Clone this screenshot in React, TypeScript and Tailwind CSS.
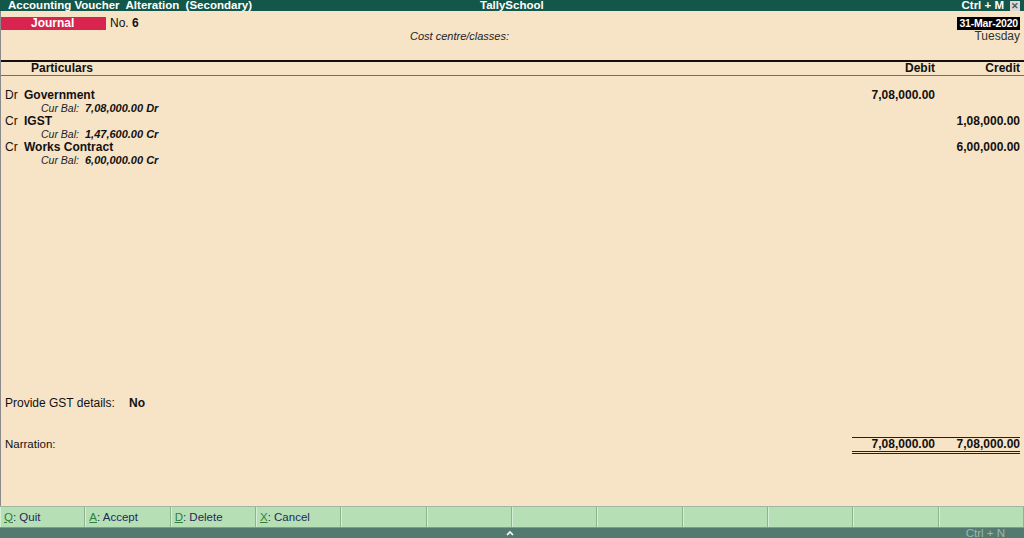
import React from "react";

const font = { fontFamily: '"Liberation Sans", Arial, sans-serif' };

const rows = [
  { side: "Dr", name: "Government", bal: "7,08,000.00 Dr", debit: "7,08,000.00", credit: "" },
  { side: "Cr", name: "IGST", bal: "1,47,600.00 Cr", debit: "", credit: "1,08,000.00" },
  { side: "Cr", name: "Works Contract", bal: "6,00,000.00 Cr", debit: "", credit: "6,00,000.00" },
];

const buttons = [
  { k: "Q", t: ": Quit" },
  { k: "A", t: ": Accept" },
  { k: "D", t: ": Delete" },
  { k: "X", t: ": Cancel" },
  null, null, null, null, null, null, null, null,
];

export default function App() {
  return (
    <div className="w-[1024px] h-[538px] flex flex-col overflow-hidden text-[12px] leading-[13px] text-[#111]" style={font}>
      {/* Title bar */}
      <div className="h-[11px] bg-[#13574a] flex items-center text-white font-bold text-[11.5px] leading-[11px] relative">
        <div className="pl-[8px] whitespace-pre">Accounting Voucher  Alteration  (Secondary)</div>
        <div className="absolute left-[480px] top-0">TallySchool</div>
        <div className="ml-auto flex items-center">
          <span className="pr-[6px]">Ctrl + M</span>
          <span className="w-[10px] h-[10px] bg-[#d8d8d8] text-[#555] text-[9px] leading-[10px] flex items-center justify-center mr-[4px]">✕</span>
        </div>
      </div>

      {/* Main area */}
      <div className="flex-1 bg-[#f7e3c6] border-l border-[#8a8a8a] flex flex-col pt-[6px]">
        {/* Voucher header */}
        <div className="flex h-[13px] items-center">
          <div className="w-[105px] h-[13px] bg-[#d8244f] text-white font-bold flex items-center pl-[30px]">Journal</div>
          <div className="pl-[4px]">No. <span className="font-bold">6</span></div>
          <div className="ml-auto mr-[4px] bg-black text-white font-bold text-[10.5px] px-[2px] h-[13px] flex items-center tracking-[-0.2px]">31-Mar-2020</div>
        </div>
        <div className="flex h-[13px] items-center">
          <div className="pl-[409px] italic text-[#222] text-[11px]">Cost centre/classes:</div>
          <div className="ml-auto pr-[4px] text-[#333]">Tuesday</div>
        </div>

        {/* Column header */}
        <div className="mt-[17px] border-t-2 border-[#111] border-b border-b-[#7a6a5a] h-[16px] flex items-center font-bold">
          <div className="flex-1 pl-[30px]">Particulars</div>
          <div className="w-[84px] text-right pr-[1px]">Debit</div>
          <div className="w-[84px] text-right">Credit</div>
          <div className="w-[4px]" />
        </div>

        {/* Entries */}
        <div className="mt-[13px] flex flex-col">
          {rows.map((r) => (
            <React.Fragment key={r.name}>
              <div className="flex h-[13px] items-center">
                <div className="flex-1 flex">
                  <span className="pl-[4px] w-[23px]">{r.side}</span>
                  <span className="font-bold">{r.name}</span>
                </div>
                <div className="w-[84px] text-right font-bold pr-[1px]">{r.debit}</div>
                <div className="w-[84px] text-right font-bold">{r.credit}</div>
                <div className="w-[4px]" />
              </div>
              <div className="flex h-[13px] items-center italic text-[11px]">
                <span className="pl-[40px] w-[84px] text-[#222] text-[10.5px]">Cur Bal:</span>
                <span className="font-bold">{r.bal}</span>
              </div>
            </React.Fragment>
          ))}
        </div>

        {/* GST */}
        <div className="mt-[230px] flex h-[13px] items-center">
          <span className="pl-[4px] w-[128px]">Provide GST details:</span>
          <span className="font-bold">No</span>
        </div>

        {/* Narration + totals */}
        <div className="mt-[27px] flex">
          <div className="flex-1 pl-[4px] pt-[1px] text-[11.5px]">Narration:</div>
          <div className="flex flex-col">
            <div className="flex border-t border-[#222] border-b-[3px] border-double border-b-[#222] h-[17px] items-center font-bold">
              <div className="w-[84px] text-right pr-[1px]">7,08,000.00</div>
              <div className="w-[84px] text-right">7,08,000.00</div>
            </div>
          </div>
          <div className="w-[4px]" />
        </div>
      </div>

      {/* Button bar */}
      <div className="h-[22px] bg-[#b6dfb6] flex border-t border-[#9fb89f] border-b border-b-[#7fa07f] text-[11.5px]">
        {buttons.map((b, i) => (
          <div
            key={i}
            className="flex-1 h-full flex items-center pl-[4px] border-r border-[#8fb28f] shadow-[inset_1px_0_0_#d4efd4] text-[#1e2a5a]"
          >
            {b && (
              <span>
                <span className="underline text-[#2f7f3a]">{b.k}</span>
                {b.t}
              </span>
            )}
          </div>
        ))}
      </div>

      {/* Status bar */}
      <div className="h-[10px] bg-[#537a70] flex items-center relative text-[#9fb5ae] text-[11.5px] leading-[10px]">
        <svg className="absolute left-[506px] top-[2px]" width="8" height="6" viewBox="0 0 8 6">
          <path d="M1 5 L4 2 L7 5" stroke="#ffffff" strokeWidth="1.6" fill="none" />
        </svg>
        <div className="ml-auto pr-[19px]">Ctrl + N</div>
      </div>
    </div>
  );
}
